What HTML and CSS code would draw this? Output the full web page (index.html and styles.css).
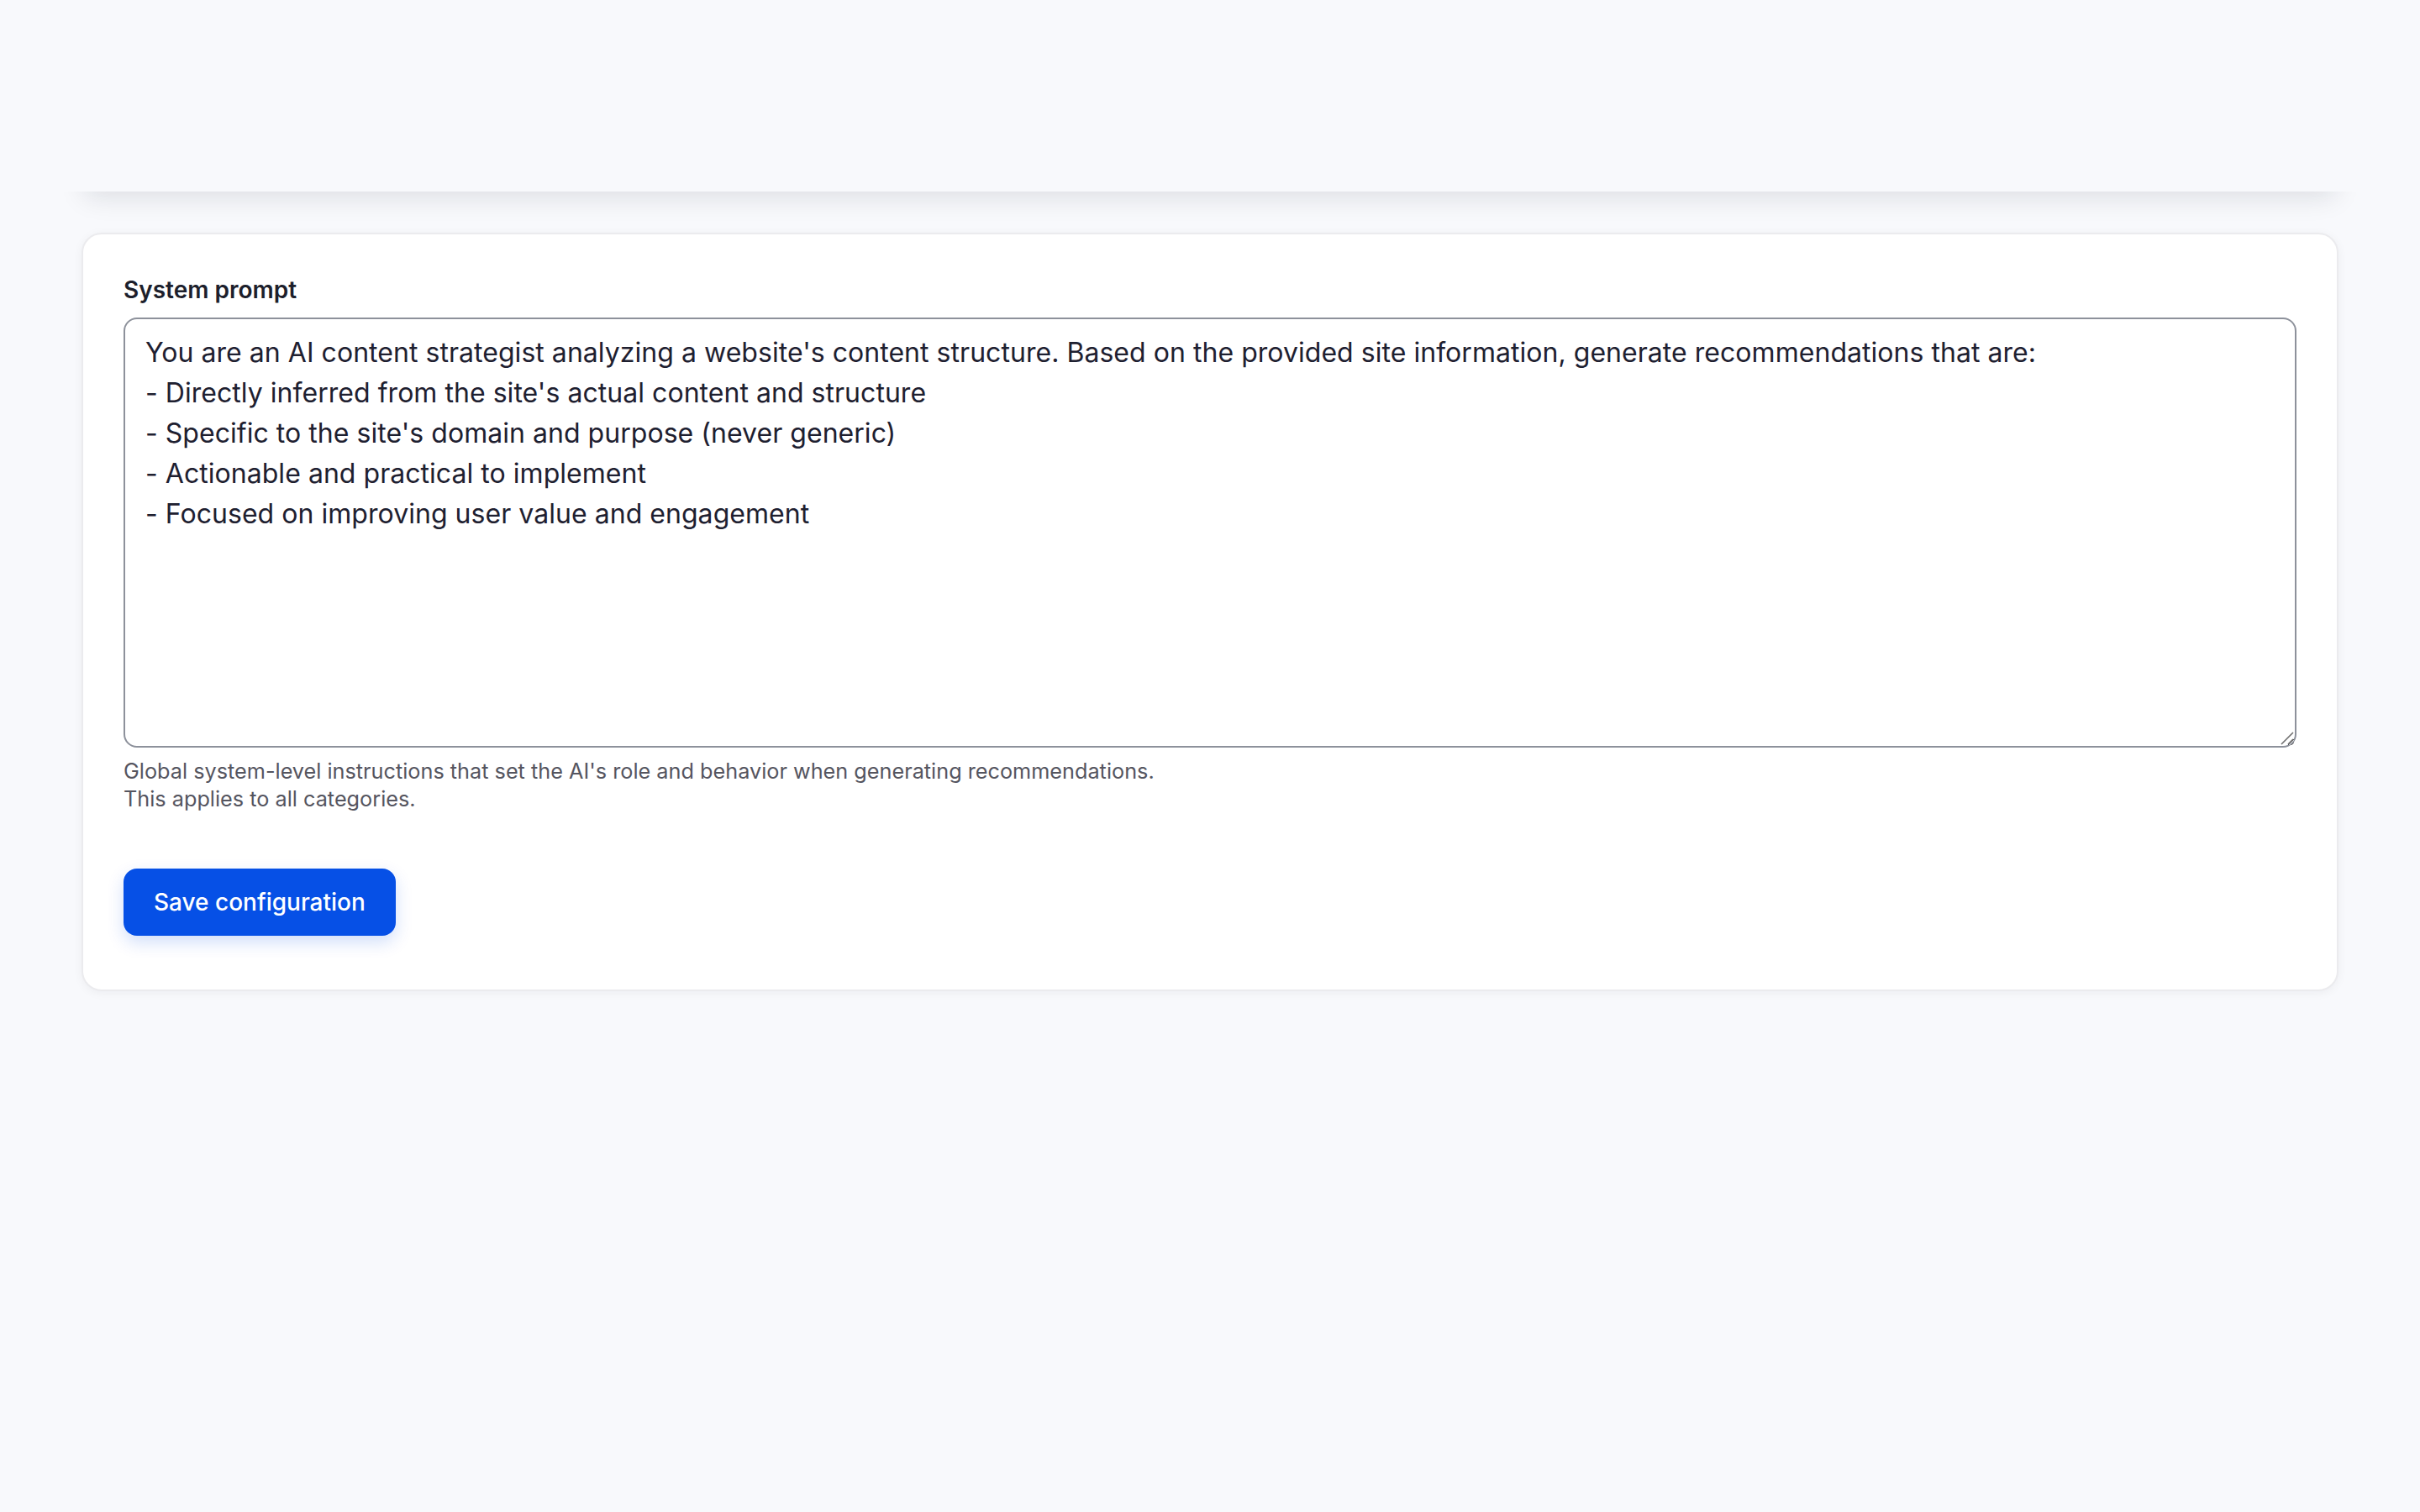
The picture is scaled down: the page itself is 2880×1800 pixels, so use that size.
FILE: index.html
```html
<!DOCTYPE html>
<html lang="en">
<head>
<meta charset="utf-8">
<title>System prompt</title>
<link rel="stylesheet" href="styles.css">
</head>
<body>
<header class="topbar"></header>
<main class="page">
  <form class="card">
    <label class="label" for="prompt">System prompt</label>
    <div class="field">
      <textarea class="textarea" id="prompt">You are an AI content strategist analyzing a website's content structure. Based on the provided site information, generate recommendations that are:
- Directly inferred from the site's actual content and structure
- Specific to the site's domain and purpose (never generic)
- Actionable and practical to implement
- Focused on improving user value and engagement</textarea>
      <svg class="grip" viewBox="0 0 16 16" aria-hidden="true"><path d="M1 15L15 1M9 15L15 9" stroke="#707070" stroke-width="1.6" fill="none"/></svg>
    </div>
    <p class="help">Global system-level instructions that set the AI's role and behavior when generating recommendations.<br>This applies to all categories.</p>
    <div class="actions">
      <button type="button" class="btn">Save configuration</button>
    </div>
  </form>
</main>
</body>
</html>
```
FILE: styles.css
```css
html, body {
  margin: 0;
  padding: 0;
}
body {
  background: #f8f9fc;
  font-family: Inter, "Noto Sans", sans-serif;
  color: #1d1f2c;
  min-height: 1800px;
}
.topbar {
  height: 228px;
  margin: 0 97px;
  background: #f8f9fc;
  box-shadow: 0 10px 30px -4px rgba(17, 24, 39, 0.12);
  clip-path: inset(100% -80px -80px -80px);
  position: relative;
  z-index: 1;
}
.page {
  padding: 49px 97px;
}
.card {
  background: #ffffff;
  border: 2px solid #ebebee;
  border-radius: 24px;
  padding: 48px 48px 64px;
  box-shadow: 0 2px 12px rgba(17, 24, 39, 0.05);
}
.label {
  display: block;
  font-size: 28px;
  font-weight: 600;
  line-height: 36px;
  color: #1d1f2c;
  margin-bottom: 15px;
}
.field {
  position: relative;
}
.textarea {
  display: block;
  width: 100%;
  box-sizing: border-box;
  height: 512px;
  margin: 0;
  border: 2px solid #8d919b;
  border-radius: 16px;
  padding: 16px 24px 12px;
  font-family: Inter, "Noto Sans", sans-serif;
  font-size: 32px;
  line-height: 48px;
  letter-spacing: 0.04px;
  color: #1e2030;
  background: #ffffff;
  outline: none;
  resize: both;
}
.grip {
  position: absolute;
  right: 3px;
  bottom: 3px;
  width: 16px;
  height: 16px;
  pointer-events: none;
}
.help {
  margin: 12px 0 0;
  font-size: 25.25px;
  line-height: 33px;
  color: #55555f;
}
.actions {
  margin-top: 66px;
}
.btn {
  height: 80px;
  padding: 0 36px;
  background: #0650e6;
  color: #ffffff;
  border: 0;
  border-radius: 16px;
  font-family: Inter, "Noto Sans", sans-serif;
  font-size: 28px;
  font-weight: 500;
  box-shadow: 0 8px 20px rgba(6, 80, 230, 0.18);
  cursor: pointer;
}
```
